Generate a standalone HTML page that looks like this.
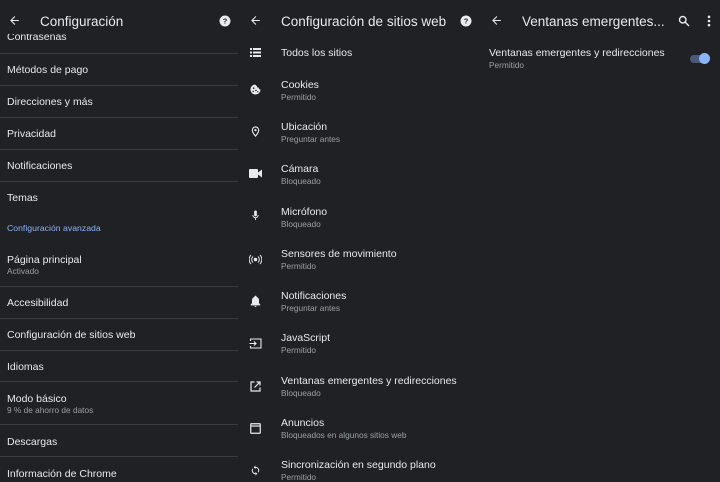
<!DOCTYPE html>
<html><head><meta charset="utf-8"><style>
*{margin:0;padding:0;box-sizing:border-box}
body{width:720px;height:479px;background:#202124;overflow:hidden;position:relative;font-family:"Liberation Sans",Arial,sans-serif;color:#e8eaed}
.a{position:absolute;white-space:nowrap}
.t{font-size:10.5px;color:#e8eaed}
.s{font-size:8.3px;color:#9aa0a6}
.h{font-size:13.5px;color:#e8eaed}
.d{position:absolute;left:0;width:238px;height:1px;background:#3a3b3f}
svg{position:absolute}
</style></head><body>

<!-- Panel 1 -->
<div class="a t" style="left:7px;top:31px">Contraseñas</div>
<div class="a" style="left:0;top:0;width:240px;height:34px;background:#202124"></div>
<svg style="left:8px;top:14px" width="13" height="13" viewBox="0 0 24 24"><path d="M20 11H7.8l5.6-5.6L12 4l-8 8 8 8 1.4-1.4L7.8 13H20z" fill="#e8eaed"/></svg>
<div class="a h" style="left:40px;top:14px">Configuración</div>
<svg style="left:219px;top:15px" width="12" height="12" viewBox="0 0 24 24"><circle cx="12" cy="12" r="11" fill="#e8eaed"/><text x="12" y="17" font-size="15" font-weight="bold" text-anchor="middle" fill="#202124" font-family="Liberation Sans">?</text></svg>
<div class="d" style="top:53px"></div>
<div class="a t" style="left:7px;top:64px">Métodos de pago</div>
<div class="d" style="top:85px"></div>
<div class="a t" style="left:7px;top:96px">Direcciones y más</div>
<div class="d" style="top:117px"></div>
<div class="a t" style="left:7px;top:128px">Privacidad</div>
<div class="d" style="top:149px"></div>
<div class="a t" style="left:7px;top:160px">Notificaciones</div>
<div class="d" style="top:181px"></div>
<div class="a t" style="left:7px;top:192px">Temas</div>
<div class="a" style="left:7px;top:223px;font-size:8.7px;color:#8ab4f8">Configuración avanzada</div>
<div class="a t" style="left:7px;top:254px">Página principal</div>
<div class="a s" style="left:7px;top:266px">Activado</div>
<div class="d" style="top:286px"></div>
<div class="a t" style="left:7px;top:297px">Accesibilidad</div>
<div class="d" style="top:318px"></div>
<div class="a t" style="left:7px;top:329px">Configuración de sitios web</div>
<div class="d" style="top:350px"></div>
<div class="a t" style="left:7px;top:361px">Idiomas</div>
<div class="d" style="top:381px"></div>
<div class="a t" style="left:7px;top:393px">Modo básico</div>
<div class="a s" style="left:7px;top:405px">9 % de ahorro de datos</div>
<div class="d" style="top:424px"></div>
<div class="a t" style="left:7px;top:436px">Descargas</div>
<div class="d" style="top:456px"></div>
<div class="a t" style="left:7px;top:468px">Información de Chrome</div>

<!-- Panel 2 -->
<svg style="left:249px;top:14px" width="13" height="13" viewBox="0 0 24 24"><path d="M20 11H7.8l5.6-5.6L12 4l-8 8 8 8 1.4-1.4L7.8 13H20z" fill="#e8eaed"/></svg>
<div class="a h" style="left:281px;top:14px">Configuración de sitios web</div>
<svg style="left:460px;top:15px" width="12" height="12" viewBox="0 0 24 24"><circle cx="12" cy="12" r="11" fill="#e8eaed"/><text x="12" y="17" font-size="15" font-weight="bold" text-anchor="middle" fill="#202124" font-family="Liberation Sans">?</text></svg>

<svg style="left:250px;top:48px" width="11" height="9" viewBox="0 0 11 9" fill="#e8eaed"><rect x="0" y="0" width="2" height="2"/><rect x="3" y="0" width="8" height="2"/><rect x="0" y="3.5" width="2" height="2"/><rect x="3" y="3.5" width="8" height="2"/><rect x="0" y="7" width="2" height="2"/><rect x="3" y="7" width="8" height="2"/></svg>
<div class="a t" style="left:281px;top:47px">Todos los sitios</div>

<svg style="left:250px;top:84px" width="11" height="11" viewBox="0 0 24 24"><path d="M12 1a11 11 0 1 0 11 11 4 4 0 0 1-4-4 4 4 0 0 1-4-4 3 3 0 0 1-3-3z" fill="#e8eaed"/><circle cx="8" cy="9" r="1.8" fill="#202124"/><circle cx="13" cy="14" r="1.8" fill="#202124"/><circle cx="7" cy="16" r="1.6" fill="#202124"/><circle cx="17" cy="17" r="1.5" fill="#202124"/></svg>
<div class="a t" style="left:281px;top:79px">Cookies</div>
<div class="a s" style="left:281px;top:92px">Permitido</div>

<svg style="left:250px;top:125px" width="11" height="13" viewBox="0 0 24 24"><path d="M12 2a7 7 0 0 0-7 7c0 5 7 13 7 13s7-8 7-13a7 7 0 0 0-7-7z" fill="none" stroke="#e8eaed" stroke-width="2.5"/><circle cx="12" cy="9" r="2.5" fill="#e8eaed"/></svg>
<div class="a t" style="left:281px;top:121px">Ubicación</div>
<div class="a s" style="left:281px;top:134px">Preguntar antes</div>

<svg style="left:249px;top:169px" width="13" height="9" viewBox="0 0 13 9" fill="#e8eaed"><rect x="0" y="0" width="9" height="9" rx="1"/><path d="M9 3.5 13 0.5v8L9 5.5z"/></svg>
<div class="a t" style="left:281px;top:163px">Cámara</div>
<div class="a s" style="left:281px;top:176px">Bloqueado</div>

<svg style="left:250px;top:209px" width="11" height="13" viewBox="0 0 24 24" fill="#e8eaed"><rect x="9" y="1" width="6" height="13" rx="3"/><path d="M5 11a7 7 0 0 0 14 0h-2a5 5 0 0 1-10 0z"/><rect x="11" y="17" width="2" height="5"/></svg>
<div class="a t" style="left:281px;top:206px">Micrófono</div>
<div class="a s" style="left:281px;top:219px">Bloqueado</div>

<svg style="left:249px;top:254px" width="13" height="11" viewBox="0 0 26 22" fill="none" stroke="#e8eaed" stroke-width="2"><circle cx="13" cy="11" r="2.5" fill="#e8eaed"/><path d="M8 5a8 8 0 0 0 0 12M18 5a8 8 0 0 1 0 12M4 2a13 13 0 0 0 0 18M22 2a13 13 0 0 1 0 18"/></svg>
<div class="a t" style="left:281px;top:248px">Sensores de movimiento</div>
<div class="a s" style="left:281px;top:261px">Permitido</div>

<svg style="left:249px;top:294px" width="13" height="14" viewBox="0 0 24 24" fill="#e8eaed"><path d="M12 2a2 2 0 0 0-2 2v.5A6.5 6.5 0 0 0 5.5 11v5L3 19v1h18v-1l-2.5-3v-5A6.5 6.5 0 0 0 14 4.5V4a2 2 0 0 0-2-2z"/><path d="M10 21h4a2 2 0 0 1-4 0z"/></svg>
<div class="a t" style="left:281px;top:290px">Notificaciones</div>
<div class="a s" style="left:281px;top:303px">Preguntar antes</div>

<svg style="left:249px;top:338px" width="13" height="11" viewBox="0 0 26 22" fill="none" stroke="#e8eaed" stroke-width="2.2"><path d="M3 6V2h21v18H3v-4"/><path d="M1 11h13M10 7l4 4-4 4"/></svg>
<div class="a t" style="left:281px;top:332px">JavaScript</div>
<div class="a s" style="left:281px;top:345px">Permitido</div>

<svg style="left:250px;top:381px" width="11" height="11" viewBox="0 0 22 22" fill="none" stroke="#e8eaed" stroke-width="2.4"><path d="M9 2H2v18h18v-7"/><path d="M13 2h7v7M20 2 9 13"/></svg>
<div class="a t" style="left:281px;top:375px">Ventanas emergentes y redirecciones</div>
<div class="a s" style="left:281px;top:388px">Bloqueado</div>

<svg style="left:250px;top:423px" width="11" height="11" viewBox="0 0 22 22" fill="none" stroke="#e8eaed" stroke-width="2.4"><rect x="1.5" y="1.5" width="19" height="19" rx="1"/><path d="M1.5 6h19"/></svg>
<div class="a t" style="left:281px;top:417px">Anuncios</div>
<div class="a s" style="left:281px;top:430px">Bloqueados en algunos sitios web</div>

<svg style="left:250px;top:464px" width="11" height="13" viewBox="0 0 24 24" fill="#e8eaed"><path d="M12 4V1L8 5l4 4V6a6 6 0 0 1 5.2 9l1.5 1.5A8 8 0 0 0 12 4zm0 14a6 6 0 0 1-5.2-9L5.3 7.5A8 8 0 0 0 12 20v3l4-4-4-4z"/></svg>
<div class="a t" style="left:281px;top:459px">Sincronización en segundo plano</div>
<div class="a s" style="left:281px;top:472px">Permitido</div>

<!-- Panel 3 -->
<svg style="left:490px;top:14px" width="13" height="13" viewBox="0 0 24 24"><path d="M20 11H7.8l5.6-5.6L12 4l-8 8 8 8 1.4-1.4L7.8 13H20z" fill="#e8eaed"/></svg>
<div class="a h" style="left:522px;top:14px">Ventanas emergentes...</div>
<svg style="left:678px;top:15px" width="12" height="12" viewBox="0 0 24 24" fill="none" stroke="#e8eaed" stroke-width="2.8"><circle cx="9.5" cy="9.5" r="6.5"/><path d="M14.5 14.5 22 22"/></svg>
<svg style="left:707px;top:15px" width="4" height="12" viewBox="0 0 4 13" fill="#e8eaed"><circle cx="2" cy="2" r="1.4"/><circle cx="2" cy="6.5" r="1.4"/><circle cx="2" cy="11" r="1.4"/></svg>
<div class="a t" style="left:489px;top:47px">Ventanas emergentes y redirecciones</div>
<div class="a s" style="left:489px;top:60px">Permitido</div>
<div class="a" style="left:690px;top:55px;width:17px;height:8px;border-radius:4px;background:#4b5a78"></div>
<div class="a" style="left:699px;top:53px;width:11px;height:11px;border-radius:50%;background:#8ab4f8"></div>
</body></html>
